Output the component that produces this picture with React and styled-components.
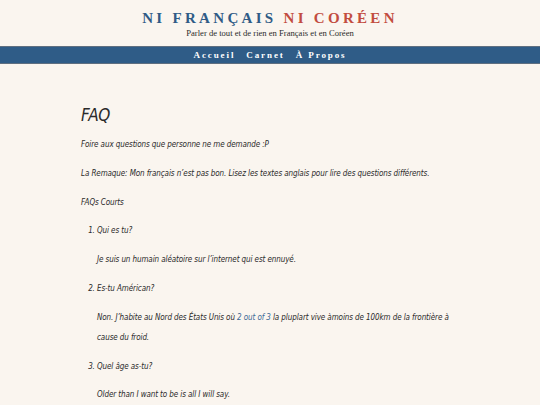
import React from "react";
import styled, { createGlobalStyle } from "styled-components";

const Global = createGlobalStyle`
  html, body { margin: 0; padding: 0; background: #faf5ef; }
  body { font-family: "Liberation Serif", serif; color: #2b2b2b; }
`;

const Header = styled.header`
  padding-top: 8px;
  text-align: center;
`;

const Title = styled.h1`
  margin: 0;
  font-family: "Liberation Serif", "Times New Roman", serif;
  font-weight: 700;
  font-size: 15px;
  line-height: 20px;
  letter-spacing: 3.3px;
`;

const Part = styled.span`
  color: ${(p) => p.$c};
`;

const Subtitle = styled.div`
  font-family: "Liberation Serif", serif;
  font-size: 8.6px;
  line-height: 10px;
  color: #2b2b2b;
`;

const Nav = styled.nav`
  margin-top: 8px;
  height: 16px;
  background: #2f5c87;
  border-top: 1px solid #5f6f80;
  border-bottom: 1px solid #5f6f80;
  display: flex;
  justify-content: center;
  align-items: center;
  gap: 11px;
`;

const NavLink = styled.a`
  font-family: "Liberation Serif", serif;
  font-weight: 700;
  font-size: 9px;
  letter-spacing: 1.9px;
  color: #ffffff;
  text-decoration: none;
`;

const Main = styled.main`
  padding: 39px 50px 0 81px;
  font-family: "DejaVu Sans Condensed", "DejaVu Sans", sans-serif;
  font-style: italic;
  color: #2a2a2a;
`;

const Heading = styled.h2`
  margin: 0 0 8px;
  font-size: 17px;
  line-height: 24px;
  font-weight: 400;
  letter-spacing: -0.5px;
`;

const P = styled.p`
  margin: 0 0 8.8px;
  font-size: 8px;
  line-height: 20px;
  letter-spacing: -0.1px;
`;

const List = styled.ol`
  margin: 0;
  padding-left: 16px;
  font-size: 8px;
  letter-spacing: -0.1px;
`;

const Item = styled.li`
  margin: 0 0 8.8px;
  line-height: 20px;
`;

const Answer = styled.p`
  margin: 8.8px 0 0;
  line-height: 20px;
`;

const Link = styled.a`
  color: #3b6995;
  text-decoration: none;
`;

export default function App() {
  return (
    <>
      <Global />
      <Header>
        <Title>
          <Part $c="#2f5b86">NI FRANÇAIS</Part> <Part $c="#c24c40">NI CORÉEN</Part>
        </Title>
        <Subtitle>Parler de tout et de rien en Français et en Coréen</Subtitle>
        <Nav>
          <NavLink href="#">Accueil</NavLink>
          <NavLink href="#">Carnet</NavLink>
          <NavLink href="#">À Propos</NavLink>
        </Nav>
      </Header>
      <Main>
        <Heading>FAQ</Heading>
        <P>Foire aux questions que personne ne me demande :P</P>
        <P>La Remaque: Mon français n’est pas bon. Lisez les textes anglais pour lire des questions différents.</P>
        <P>FAQs Courts</P>
        <List>
          <Item>
            Qui es tu?
            <Answer>Je suis un humain aléatoire sur l’internet qui est ennuyé.</Answer>
          </Item>
          <Item>
            Es-tu Américan?
            <Answer>
              Non. J’habite au Nord des États Unis où <Link href="#">2 out of 3</Link> la pluplart vive àmoins de 100km de la frontière à
              <br />cause du froid.
            </Answer>
          </Item>
          <Item>
            Quel âge as-tu?
            <Answer>Older than I want to be is all I will say.</Answer>
          </Item>
        </List>
      </Main>
    </>
  );
}
